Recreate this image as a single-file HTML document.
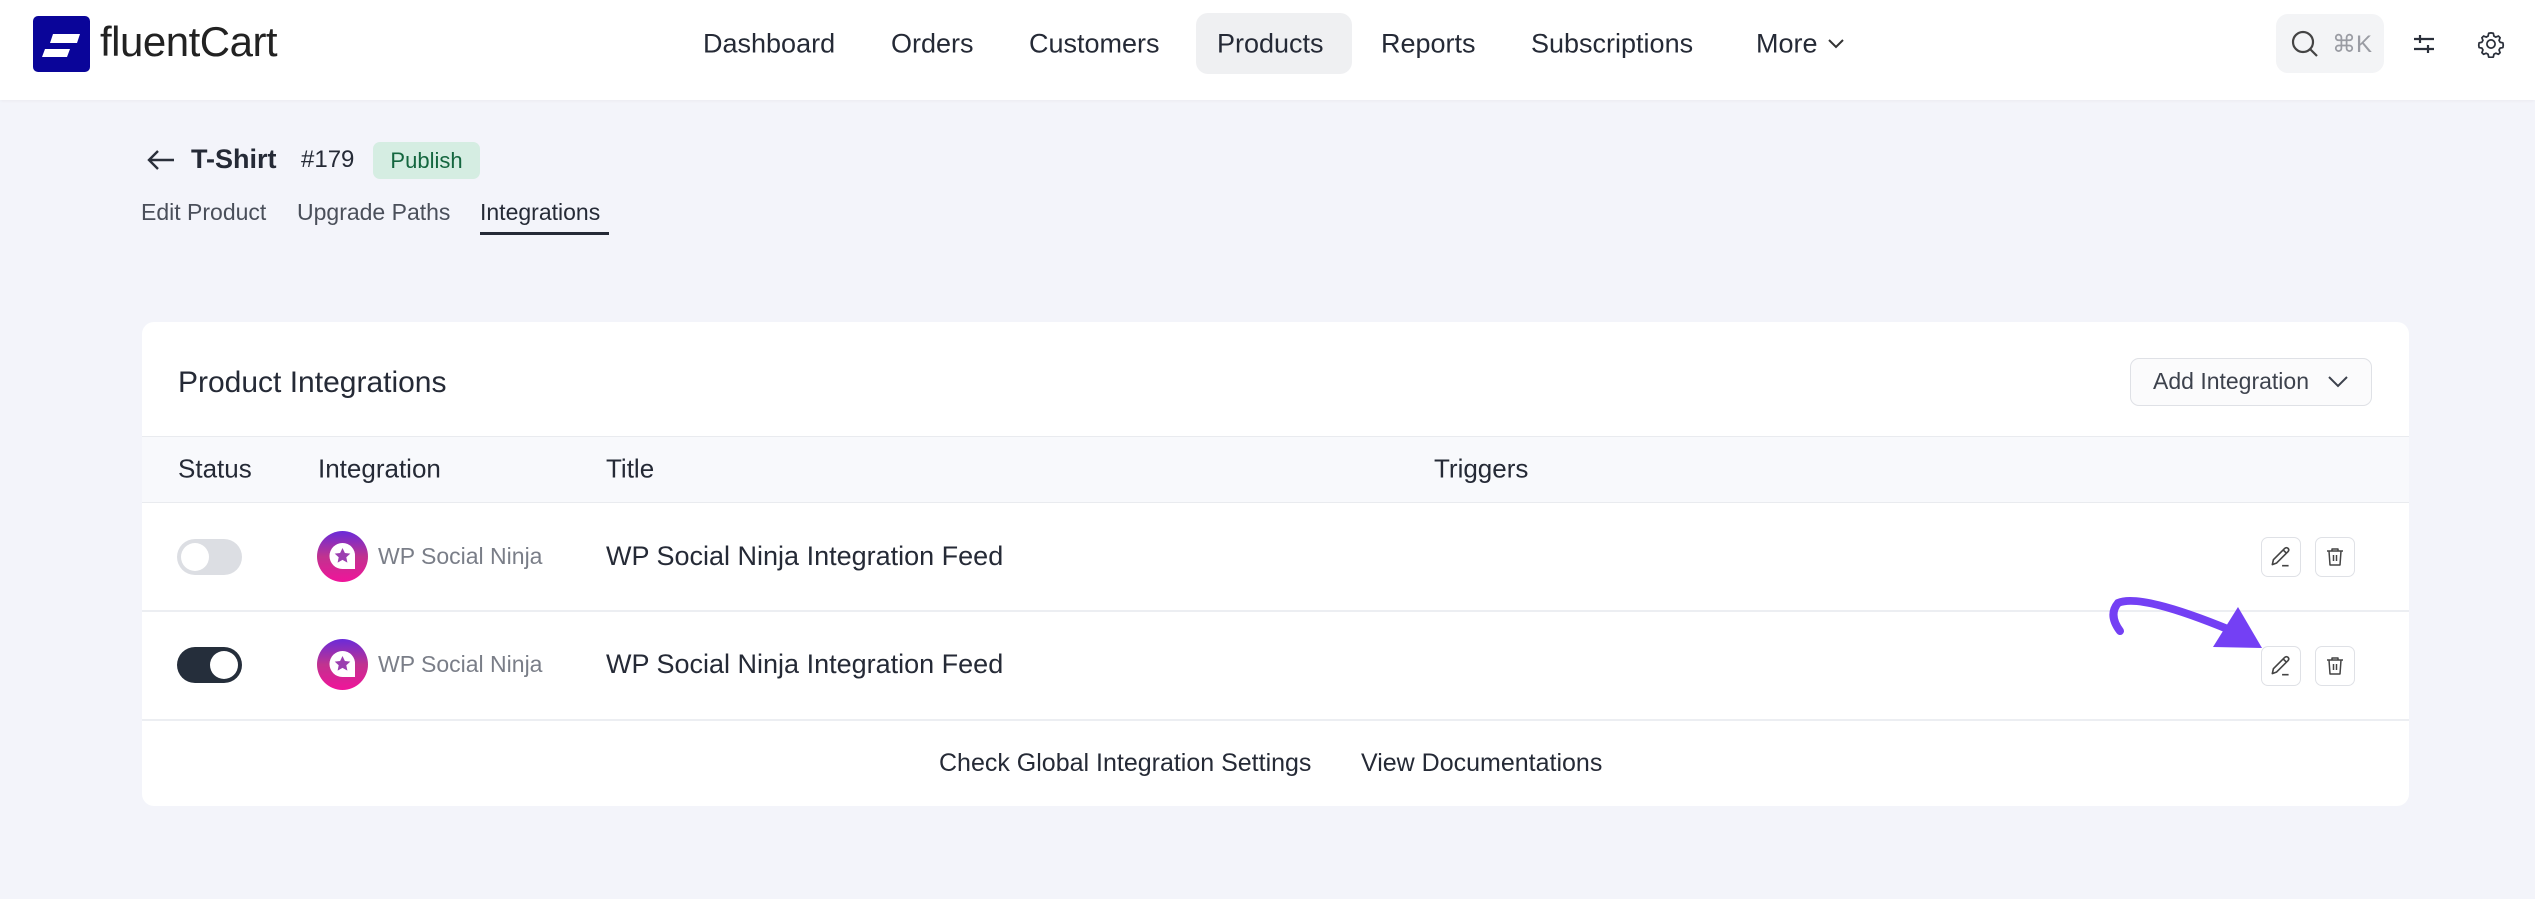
<!DOCTYPE html>
<html><head><meta charset="utf-8"><style>
*{margin:0;padding:0;box-sizing:border-box}
body{width:2535px;height:899px;background:#f3f4fa;font-family:"Liberation Sans",sans-serif;color:#1f2533;position:relative;overflow:hidden}
.a{position:absolute;white-space:nowrap}
.hdr{position:absolute;left:0;top:0;width:2535px;height:100px;background:#fff;box-shadow:0 1px 3px rgba(0,0,0,.04)}
.nav{font-size:27px;color:#252a36;top:44px;transform:translateY(-50%)}
.card{position:absolute;left:142px;top:322px;width:2267px;height:484px;background:#fff;border-radius:12px}
.th{font-size:26px;color:#252a36;top:469px;transform:translateY(-50%)}
.btn{position:absolute;width:40px;height:40px;border:1.5px solid #dfe1e6;border-radius:7px;background:#fff}
</style></head><body>
<div class="hdr"></div>
<div class="a" style="left:33px;top:16px;width:57px;height:56px;background:#0a0599;border-radius:5px"></div>
<svg class="a" style="left:33px;top:16px" width="57" height="56"><path d="M20 18 L47 18 L44 27 L17 27 Z M12 33 L37 33 L34 41 L9 41 Z" fill="#fff"/></svg>
<div class="a" style="left:100px;top:18px;font-size:42px;color:#222;letter-spacing:-0.5px"><span style="font-weight:300">fluent</span><span style="font-weight:500">Cart</span></div>

<div class="a" style="left:1196px;top:13px;width:156px;height:61px;background:#eff0f2;border-radius:12px"></div>
<div class="a nav" style="left:703px">Dashboard</div>
<div class="a nav" style="left:891px">Orders</div>
<div class="a nav" style="left:1029px">Customers</div>
<div class="a nav" style="left:1217px">Products</div>
<div class="a nav" style="left:1381px">Reports</div>
<div class="a nav" style="left:1531px">Subscriptions</div>
<div class="a nav" style="left:1756px">More</div>
<svg class="a" style="left:1827px;top:37px" width="18" height="14"><path d="M2 3 L9 10 L16 3" fill="none" stroke="#333" stroke-width="2"/></svg>

<div class="a" style="left:2276px;top:14px;width:108px;height:59px;background:#f3f4f6;border-radius:12px"></div>
<svg class="a" style="left:2290px;top:29px" width="30" height="30"><circle cx="13" cy="13" r="10" fill="none" stroke="#444" stroke-width="2.2"/><path d="M20 20 L27 27" stroke="#444" stroke-width="2.2"/></svg>
<div class="a" style="left:2332px;top:30px;font-size:24px;color:#9a9ca3">⌘K</div>
<svg class="a" style="left:2412px;top:32px" width="24" height="24"><path d="M2 7 H22 M2 17 H22" stroke="#2a2f3a" stroke-width="2.2"/><path d="M8 3 V11 M16 13 V21" stroke="#2a2f3a" stroke-width="2.2"/></svg>
<svg class="a" style="left:2477px;top:30px" width="28" height="28" viewBox="0 0 24 24"><path d="M12 2.5l2 .3.5 2.4 1.6.9 2.3-.9 1.4 1.4-.9 2.3.9 1.6 2.4.5.3 2-.3 2-2.4.5-.9 1.6.9 2.3-1.4 1.4-2.3-.9-1.6.9-.5 2.4-2 .3-2-.3-.5-2.4-1.6-.9-2.3.9-1.4-1.4.9-2.3-.9-1.6-2.4-.5-.3-2 .3-2 2.4-.5.9-1.6-.9-2.3 1.4-1.4 2.3.9 1.6-.9.5-2.4z" fill="none" stroke="#2a2f3a" stroke-width="1.5" stroke-linejoin="round"/><circle cx="12" cy="12" r="3.5" fill="none" stroke="#2a2f3a" stroke-width="1.5"/></svg>

<svg class="a" style="left:146px;top:148px" width="30" height="24"><path d="M28 12 H4 M12 3 L3 12 L12 21" fill="none" stroke="#2a2f3a" stroke-width="2.4"/></svg>
<div class="a" style="left:191px;top:144px;font-size:27px;font-weight:bold;color:#252a36">T-Shirt</div>
<div class="a" style="left:301px;top:146px;font-size:24px;color:#252a36">#179</div>
<div class="a" style="left:373px;top:142px;width:107px;height:37px;background:#d5ede2;border-radius:7px;font-size:22px;color:#14663f;text-align:center;line-height:37px">Publish</div>
<div class="a" style="left:141px;top:199px;font-size:23px;color:#4a4f5a">Edit Product</div>
<div class="a" style="left:297px;top:199px;font-size:23px;color:#4a4f5a">Upgrade Paths</div>
<div class="a" style="left:480px;top:199px;font-size:23px;color:#252a36">Integrations</div>
<div class="a" style="left:480px;top:232px;width:129px;height:3px;background:#252a36"></div>

<div class="card"></div>
<div class="a" style="left:178px;top:366px;font-size:30px;color:#252a36">Product Integrations</div>
<div class="a" style="left:2130px;top:358px;width:242px;height:48px;border:1.5px solid #dfe1e6;border-radius:9px;background:#fbfbfc"></div>
<div class="a" style="left:2153px;top:368px;font-size:23px;color:#3d424d">Add Integration</div>
<svg class="a" style="left:2327px;top:374px" width="22" height="16"><path d="M2 3 L11 12 L20 3" fill="none" stroke="#3d424d" stroke-width="2"/></svg>

<div class="a" style="left:142px;top:436px;width:2267px;height:67px;background:#f8f9fc;border-top:1.5px solid #e9ebef;border-bottom:1.5px solid #e9ebef"></div>
<div class="a th" style="left:178px">Status</div>
<div class="a th" style="left:318px">Integration</div>
<div class="a th" style="left:606px">Title</div>
<div class="a th" style="left:1434px">Triggers</div>
<div class="a" style="left:142px;top:610px;width:2267px;height:1.5px;background:#eceef2"></div>
<div class="a" style="left:142px;top:719px;width:2267px;height:1.5px;background:#eceef2"></div>

<div class="a" style="left:177px;top:539px;width:65px;height:36px;background:#dcdee3;border-radius:18px"></div>
<div class="a" style="left:181px;top:543px;width:28px;height:28px;background:#fff;border-radius:50%"></div>
<div class="a" style="left:177px;top:647px;width:65px;height:36px;background:#252e3b;border-radius:18px"></div>
<div class="a" style="left:210px;top:651px;width:28px;height:28px;background:#fff;border-radius:50%"></div>

<svg width="0" height="0" style="position:absolute"><defs><linearGradient id="g" x1="0" y1="0" x2="0" y2="1"><stop offset="0" stop-color="#6a2bd9"/><stop offset=".5" stop-color="#c0338f"/><stop offset="1" stop-color="#f0149a"/></linearGradient></defs></svg>
<svg class="a" style="left:317px;top:531px" width="51" height="51"><circle cx="25.5" cy="25.5" r="25.5" fill="url(#g)"/><path d="M25.5 12 A13 13 0 1 0 25.5 38 L38 38 L38 25.5 A12.5 12.5 0 0 0 25.5 12Z" fill="#fff"/><path d="M25.5 17l2.4 5 5.4.6-4 3.7 1.1 5.3-4.9-2.7-4.9 2.7 1.1-5.3-4-3.7 5.4-.6z" fill="#9b3fb0"/></svg>
<svg class="a" style="left:317px;top:639px" width="51" height="51"><circle cx="25.5" cy="25.5" r="25.5" fill="url(#g)"/><path d="M25.5 12 A13 13 0 1 0 25.5 38 L38 38 L38 25.5 A12.5 12.5 0 0 0 25.5 12Z" fill="#fff"/><path d="M25.5 17l2.4 5 5.4.6-4 3.7 1.1 5.3-4.9-2.7-4.9 2.7 1.1-5.3-4-3.7 5.4-.6z" fill="#9b3fb0"/></svg>
<div class="a" style="left:378px;top:543px;font-size:23px;color:#7a7e88">WP Social Ninja</div>
<div class="a" style="left:378px;top:651px;font-size:23px;color:#7a7e88">WP Social Ninja</div>
<div class="a" style="left:606px;top:541px;font-size:27px;color:#252a36">WP Social Ninja Integration Feed</div>
<div class="a" style="left:606px;top:649px;font-size:27px;color:#252a36">WP Social Ninja Integration Feed</div>

<div class="btn" style="left:2261px;top:537px"></div>
<div class="btn" style="left:2315px;top:537px"></div>
<div class="btn" style="left:2261px;top:646px"></div>
<div class="btn" style="left:2315px;top:646px"></div>
<svg class="a" style="left:2268px;top:544px" width="26" height="26" viewBox="0 0 24 24"><path d="M4 19 L5 14.5 L15.5 4 Q17 2.8 18.5 4 Q19.8 5.5 18.5 7 L8 17.5 Z M14 5.5 L17 8.5 M13 20 H19" fill="none" stroke="#444" stroke-width="1.5" stroke-linejoin="round"/></svg>
<svg class="a" style="left:2268px;top:653px" width="26" height="26" viewBox="0 0 24 24"><path d="M4 19 L5 14.5 L15.5 4 Q17 2.8 18.5 4 Q19.8 5.5 18.5 7 L8 17.5 Z M14 5.5 L17 8.5 M13 20 H19" fill="none" stroke="#444" stroke-width="1.5" stroke-linejoin="round"/></svg>
<svg class="a" style="left:2323px;top:545px" width="24" height="24" viewBox="0 0 24 24"><path d="M4 6 H20 M9 6 V4 H15 V6 M6 6 L7 20 H17 L18 6 M10.5 10 V16 M13.5 10 V16" fill="none" stroke="#444" stroke-width="1.5" stroke-linejoin="round"/></svg>
<svg class="a" style="left:2323px;top:654px" width="24" height="24" viewBox="0 0 24 24"><path d="M4 6 H20 M9 6 V4 H15 V6 M6 6 L7 20 H17 L18 6 M10.5 10 V16 M13.5 10 V16" fill="none" stroke="#444" stroke-width="1.5" stroke-linejoin="round"/></svg>

<svg class="a" style="left:2090px;top:585px" width="180" height="70"><path d="M30 46 Q18 30 28 18 Q50 8 140 45" fill="none" stroke="#7440f4" stroke-width="8" stroke-linecap="round"/><path d="M123 62 L172 63 L148 22 Z" fill="#7440f4"/></svg>

<div class="a" style="left:939px;top:749px;font-size:25px;color:#252a36">Check Global Integration Settings</div>
<div class="a" style="left:1361px;top:749px;font-size:25px;color:#252a36">View Documentations</div>
</body></html>
